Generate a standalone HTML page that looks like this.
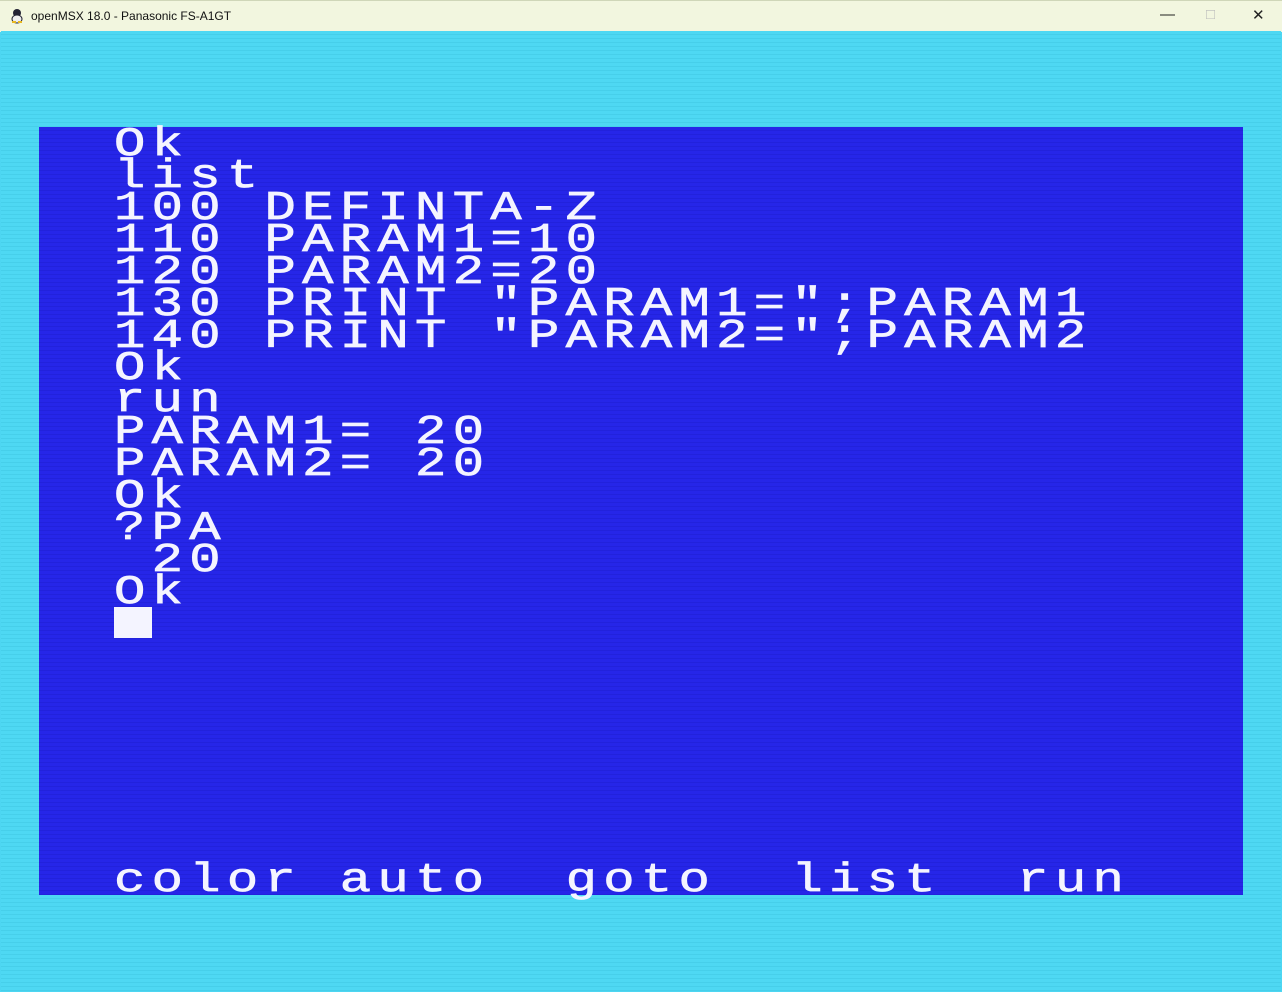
<!DOCTYPE html>
<html><head><meta charset="utf-8"><style>
html,body{margin:0;padding:0;width:1282px;height:992px;overflow:hidden;background:#4dd6f2;font-family:"Liberation Sans",sans-serif}
#tb{position:absolute;left:0;top:0;width:1282px;height:31px;background:#f2f6df;border-top:1px solid #cfd6b8}
#tb .t{position:absolute;left:31px;top:8px;font-size:12px;color:#111}
#tb .ic{position:absolute;left:11px;top:7px;width:12px;height:16px}
#tb .c{position:absolute;top:5px;font-size:15px;color:#222}
#cy{position:absolute;left:1px;top:31px;width:1280px;height:960px;background:repeating-linear-gradient(#4ed8f3 0 3px,#46cfea 3px 4px)}
#bl{position:absolute;left:39px;top:127px;width:1204px;height:768px;background:repeating-linear-gradient(#2626e8 0 3px,#2222dc 3px 4px)}
.r{position:absolute;left:75px;height:32px;line-height:32px;font-family:"Liberation Mono",monospace;font-size:36px;color:#f4f4ff;white-space:pre;letter-spacing:4.35px;transform:scale(1.45,1.12);transform-origin:0 0;-webkit-text-stroke:0.6px #f4f4ff}
#cur{position:absolute;left:75px;top:480px;width:38px;height:31px;background:#f4f4ff}
</style></head><body>
<div id="tb"><svg class="ic" viewBox="0 0 12 16"><circle cx="6" cy="5" r="4" fill="#223"/><ellipse cx="6" cy="11" rx="5" ry="4" fill="#eee" stroke="#223"/><rect x="1" y="13" width="4" height="2" fill="#e8b820"/><rect x="7" y="13" width="4" height="2" fill="#e8b820"/></svg><span class="t">openMSX 18.0 - Panasonic FS-A1GT</span>
<span class="c" style="left:1160px">&#8212;</span><span class="c" style="left:1206px;color:#bbb">&#9633;</span><span class="c" style="left:1252px">&#10005;</span></div>
<div id="cy"></div>
<div id="bl">
<div class="r" style="top:0">Ok</div>
<div class="r" style="top:32px">list</div>
<div class="r" style="top:64px">100 DEFINTA-Z</div>
<div class="r" style="top:96px">110 PARAM1=10</div>
<div class="r" style="top:128px">120 PARAM2=20</div>
<div class="r" style="top:160px">130 PRINT "PARAM1=";PARAM1</div>
<div class="r" style="top:192px">140 PRINT "PARAM2=";PARAM2</div>
<div class="r" style="top:224px">Ok</div>
<div class="r" style="top:256px">run</div>
<div class="r" style="top:288px">PARAM1= 20</div>
<div class="r" style="top:320px">PARAM2= 20</div>
<div class="r" style="top:352px">Ok</div>
<div class="r" style="top:384px">?PA</div>
<div class="r" style="top:416px"> 20</div>
<div class="r" style="top:448px">Ok</div>
<div id="cur"></div>
<div class="r" style="top:736px">color auto  goto  list  run</div>
</div>
</body></html>
